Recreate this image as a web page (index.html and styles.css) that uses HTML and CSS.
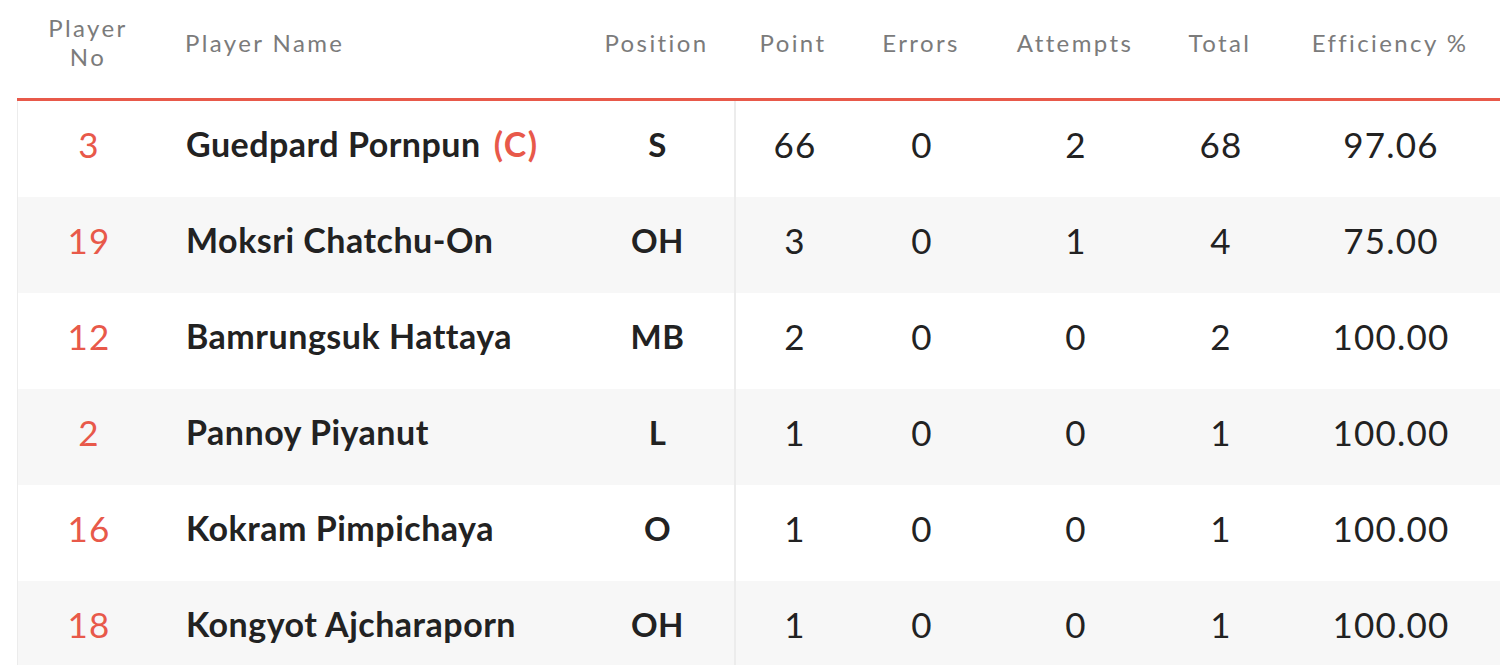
FILE: index.html
```html
<!DOCTYPE html>
<html>
<head>
<meta charset="utf-8">
<link rel="stylesheet" href="styles.css">
</head>
<body>
<div class="stats">
  <div class="row head">
    <div class="c c-no">Player<br>No</div>
    <div class="c c-name">Player Name</div>
    <div class="c">Position</div>
    <div class="c">Point</div>
    <div class="c">Errors</div>
    <div class="c">Attempts</div>
    <div class="c">Total</div>
    <div class="c">Efficiency %</div>
  </div>
  <div class="body">
    <div class="row">
      <div class="c c-no">3</div>
      <div class="c c-name">Guedpard Pornpun <span class="cap">(C)</span></div>
      <div class="c c-pos">S</div>
      <div class="c c-sep">66</div>
      <div class="c">0</div>
      <div class="c">2</div>
      <div class="c">68</div>
      <div class="c">97.06</div>
    </div>
    <div class="row alt">
      <div class="c c-no">19</div>
      <div class="c c-name">Moksri Chatchu-On</div>
      <div class="c c-pos">OH</div>
      <div class="c c-sep">3</div>
      <div class="c">0</div>
      <div class="c">1</div>
      <div class="c">4</div>
      <div class="c">75.00</div>
    </div>
    <div class="row">
      <div class="c c-no">12</div>
      <div class="c c-name">Bamrungsuk Hattaya</div>
      <div class="c c-pos">MB</div>
      <div class="c c-sep">2</div>
      <div class="c">0</div>
      <div class="c">0</div>
      <div class="c">2</div>
      <div class="c">100.00</div>
    </div>
    <div class="row alt">
      <div class="c c-no">2</div>
      <div class="c c-name">Pannoy Piyanut</div>
      <div class="c c-pos">L</div>
      <div class="c c-sep">1</div>
      <div class="c">0</div>
      <div class="c">0</div>
      <div class="c">1</div>
      <div class="c">100.00</div>
    </div>
    <div class="row">
      <div class="c c-no">16</div>
      <div class="c c-name">Kokram Pimpichaya</div>
      <div class="c c-pos">O</div>
      <div class="c c-sep">1</div>
      <div class="c">0</div>
      <div class="c">0</div>
      <div class="c">1</div>
      <div class="c">100.00</div>
    </div>
    <div class="row alt">
      <div class="c c-no">18</div>
      <div class="c c-name">Kongyot Ajcharaporn</div>
      <div class="c c-pos">OH</div>
      <div class="c c-sep">1</div>
      <div class="c">0</div>
      <div class="c">0</div>
      <div class="c">1</div>
      <div class="c">100.00</div>
    </div>
  </div>
</div>
</body>
</html>
```

FILE: styles.css
```css
html, body {
  margin: 0;
  padding: 0;
  background: #ffffff;
  overflow: hidden;
}
body {
  font-family: "Lato", "Liberation Sans", sans-serif;
  color: #222222;
}
.stats {
  margin-left: 17px;
  width: 1484px;
}
.row {
  display: grid;
  grid-template-columns: 142px 421px 153px 120px 136px 172px 118px 222px;
  height: 96px;
  align-items: stretch;
}
.row.alt {
  background: #f7f7f7;
}
.c {
  display: flex;
  align-items: center;
  justify-content: center;
  text-align: center;
  font-size: 35px;
  letter-spacing: 1.2px;
  padding-bottom: 11px;
  box-sizing: border-box;
}
.head {
  height: 98px;
  border-bottom: 3px solid #e8594a;
}
.head .c {
  color: #7b7b7b;
  font-size: 24px;
  letter-spacing: 2.4px;
  line-height: 29px;
  padding-bottom: 14px;
}
.c-name {
  justify-content: flex-start;
  padding-left: 26px;
  font-weight: 700;
  font-size: 34px;
  letter-spacing: 0.5px;
  white-space: nowrap;
}
.head .c-name {
  font-weight: 400;
}
.body {
  border-left: 1px solid #ececec;
}
.body .c-no {
  color: #e8594a;
}
.c-pos {
  font-weight: 700;
  font-size: 33px;
  letter-spacing: 0.5px;
}
.c-sep {
  border-left: 2px solid #ececec;
}
.cap {
  color: #e8594a;
  margin-left: 13px;
  letter-spacing: 1.5px;
}
```
